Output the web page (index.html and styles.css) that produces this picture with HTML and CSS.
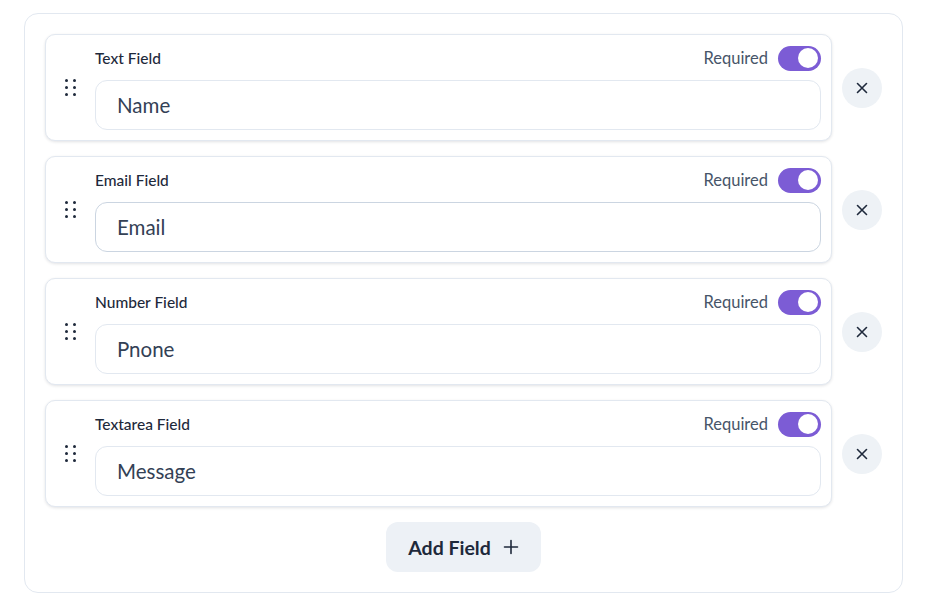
FILE: index.html
```html
<!DOCTYPE html>
<html lang="en">
<head>
<meta charset="utf-8">
<title>Form Builder</title>
<link rel="stylesheet" href="styles.css">
</head>
<body>
<div class="page">
  <div class="builder">
    <div class="fields">
      <div class="row">
        <div class="card">
          <span class="handle"><i></i><i></i><i></i><i></i><i></i><i></i></span>
          <div class="content">
            <div class="head">
              <span class="label">Text Field</span>
              <span class="req">Required <span class="toggle"><span class="knob"></span></span></span>
            </div>
            <div class="input">Name</div>
          </div>
        </div>
        <button class="remove" aria-label="Remove"><svg width="14" height="14" viewBox="0 0 14 14"><path d="M2.5 2.5l9 9M11.5 2.5l-9 9" stroke="#1e293b" stroke-width="1.6" stroke-linecap="round"/></svg></button>
      </div>
      <div class="row">
        <div class="card">
          <span class="handle"><i></i><i></i><i></i><i></i><i></i><i></i></span>
          <div class="content">
            <div class="head">
              <span class="label">Email Field</span>
              <span class="req">Required <span class="toggle"><span class="knob"></span></span></span>
            </div>
            <div class="input focus">Email</div>
          </div>
        </div>
        <button class="remove" aria-label="Remove"><svg width="14" height="14" viewBox="0 0 14 14"><path d="M2.5 2.5l9 9M11.5 2.5l-9 9" stroke="#1e293b" stroke-width="1.6" stroke-linecap="round"/></svg></button>
      </div>
      <div class="row">
        <div class="card">
          <span class="handle"><i></i><i></i><i></i><i></i><i></i><i></i></span>
          <div class="content">
            <div class="head">
              <span class="label">Number Field</span>
              <span class="req">Required <span class="toggle"><span class="knob"></span></span></span>
            </div>
            <div class="input">Pnone</div>
          </div>
        </div>
        <button class="remove" aria-label="Remove"><svg width="14" height="14" viewBox="0 0 14 14"><path d="M2.5 2.5l9 9M11.5 2.5l-9 9" stroke="#1e293b" stroke-width="1.6" stroke-linecap="round"/></svg></button>
      </div>
      <div class="row">
        <div class="card">
          <span class="handle"><i></i><i></i><i></i><i></i><i></i><i></i></span>
          <div class="content">
            <div class="head">
              <span class="label">Textarea Field</span>
              <span class="req">Required <span class="toggle"><span class="knob"></span></span></span>
            </div>
            <div class="input">Message</div>
          </div>
        </div>
        <button class="remove" aria-label="Remove"><svg width="14" height="14" viewBox="0 0 14 14"><path d="M2.5 2.5l9 9M11.5 2.5l-9 9" stroke="#1e293b" stroke-width="1.6" stroke-linecap="round"/></svg></button>
      </div>
    </div>
    <div class="actions">
      <button class="add">Add Field <svg width="16" height="16" viewBox="0 0 16 16"><path d="M8 1.5v13M1.5 8h13" stroke="#1e293b" stroke-width="1.6" stroke-linecap="round"/></svg></button>
    </div>
  </div>
</div>
</body>
</html>
```
FILE: styles.css
```css
* { box-sizing: border-box; }
html, body { margin: 0; background: #ffffff; }
body { font-family: "Lato", "Inter", sans-serif; color: #1e293b; }
.page { padding: 13px 0 0 24px; }
.builder {
  width: 879px;
  height: 580px;
  border: 1px solid #e2e8f0;
  border-radius: 14px;
  padding: 20px 20px 20px 20px;
}
.fields { display: flex; flex-direction: column; gap: 15px; }
.row { display: flex; align-items: center; gap: 10px; }
.card {
  width: 787px;
  height: 107px;
  border: 1px solid #e2e8f0;
  border-radius: 10px;
  box-shadow: 0 1px 3px rgba(15, 23, 42, 0.12);
  padding: 10px 10px 10px 18px;
  display: flex;
  align-items: center;
  gap: 19px;
  background: #fff;
}
.handle {
  width: 12px;
  display: grid;
  grid-template-columns: 3px 3px;
  column-gap: 5px;
  row-gap: 4px;
  justify-content: center;
}
.handle i { width: 3px; height: 3px; border-radius: 50%; background: #1e293b; display: block; }
.content { flex: 1; display: flex; flex-direction: column; gap: 9px; }
.head { height: 26px; display: flex; justify-content: space-between; align-items: center; }
.label { font-size: 15.5px; font-weight: 500; color: #1e293b; align-self: flex-start; margin-top: 3px; line-height: 20px; }
.req { display: flex; align-items: center; gap: 10px; font-size: 16.5px; color: #475569; }
.toggle {
  width: 43px; height: 25px; border-radius: 13px; background: #7c5cd5;
  display: flex; align-items: center; justify-content: flex-end; padding-right: 3px;
}
.knob { width: 20px; height: 20px; border-radius: 50%; background: #fff; }
.input {
  height: 50px;
  border: 1px solid #e2e8f0;
  border-radius: 12px;
  padding-left: 21px;
  display: flex; align-items: center;
  font-size: 20.5px; color: #334155;
}
.input.focus { border-color: #cbd5e1; }
.remove {
  width: 40px; height: 40px; border-radius: 50%; border: none; background: #eef2f6;
  display: flex; align-items: center; justify-content: center; padding: 0;
}
.actions { display: flex; justify-content: center; margin-top: 15px; }
.add {
  width: 155px; height: 50px; border: none; border-radius: 12px; background: #edf1f6;
  font-family: inherit; font-size: 19.5px; font-weight: 700; color: #1e293b;
  display: flex; align-items: center; justify-content: center; gap: 12px; padding: 0;
}
```
